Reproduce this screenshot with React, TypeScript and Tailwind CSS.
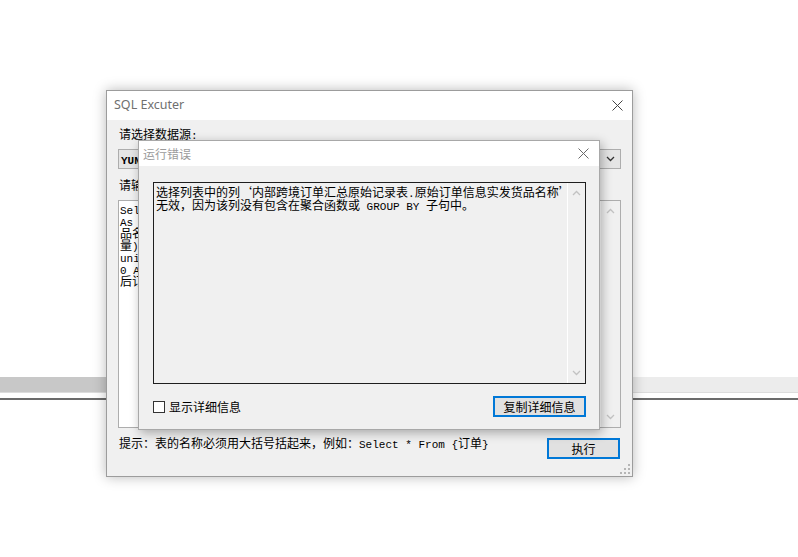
import React from "react"

// ascii runs get the mono face, the rest falls through to the CJK font
const Mixed = ({ text }: { text: string }) => (
    <>
        {text.split(/([\x20-\x7E]+)/).map((part, i) =>
            /^[\x20-\x7E]+$/.test(part) ? (
                <span key={i} className="font-['Liberation_Mono',monospace] text-[11px] leading-none">
                    {part}
                </span>
            ) : (
                <span key={i} className="leading-none">{part}</span>
            )
        )}
    </>
)

const CloseX = ({ color }: { color: string }) => (
    <svg width="11" height="11" viewBox="0 0 11 11">
        <path d="M0.5 0.5L10.5 10.5M10.5 0.5L0.5 10.5" stroke={color} strokeWidth="1" fill="none" />
    </svg>
)

const Chevron = ({ up, color }: { up?: boolean; color: string }) => (
    <svg width="9" height="6" viewBox="0 0 9 6">
        <polyline
            points={up ? "1,5 4.5,1.5 8,5" : "1,1 4.5,4.5 8,1"}
            fill="none"
            stroke={color}
            strokeWidth="1.3"
        />
    </svg>
)

const Grip = () => (
    <svg width="11" height="11" viewBox="0 0 11 11">
        <rect x="8" y="0" width="2" height="2" fill="#b5b5b5" />
        <rect x="4" y="4" width="2" height="2" fill="#b5b5b5" />
        <rect x="8" y="4" width="2" height="2" fill="#b5b5b5" />
        <rect x="0" y="8" width="2" height="2" fill="#b5b5b5" />
        <rect x="4" y="8" width="2" height="2" fill="#b5b5b5" />
        <rect x="8" y="8" width="2" height="2" fill="#b5b5b5" />
    </svg>
)

const SqlLines = [
    "Select 内部跨境订单汇总原始记录表.订单编号",
    "As 订单号, 原始订单信息实发货品名称 As 货",
    "品名称, Sum(实发数量) As 实发数",
    "量) From {内部跨境订单汇总}",
    "union all Select 订单编号, 货品",
    "0 As 数量 From {售后单}",
    "后订单",
]

const ErrorLines = [
    "选择列表中的列‘内部跨境订单汇总原始记录表.原始订单信息实发货品名称’",
    "无效，因为该列没有包含在聚合函数或 GROUP BY 子句中。",
]

export default function App() {
    return (
        <div className="relative w-[798px] h-[557px] overflow-hidden bg-white font-['Noto_Sans_CJK_SC',sans-serif] text-[12px] text-black">
            {/* page behind the windows */}
            <div className="flex flex-col">
                <div className="h-[377px]" />
                <div className="flex h-[15px]">
                    <div className="w-[106px] bg-[#c8c8c8]" />
                    <div className="flex-1 bg-[#ececec]" />
                </div>
                <div className="h-px bg-[#dcdcdc]" />
                <div className="h-[5px]" />
                <div className="h-[2px] bg-[#6b6b6b]" />
            </div>

            {/* SQL Excuter window */}
            <div className="absolute left-[106px] top-[90px] w-[527px] h-[387px] border border-[#9c9c9c] bg-[#f0f0f0] shadow-[0_0_12px_rgba(0,0,0,0.28)] flex flex-col">
                <div className="h-[29px] shrink-0 bg-white flex items-center justify-between pl-[7px] pr-[9px]">
                    <span className="font-['Noto_Sans',sans-serif] text-[12.5px] text-[#6f6f6f]">SQL Excuter</span>
                    <CloseX color="#444444" />
                </div>
                <div className="relative flex-1 flex flex-col px-[11px] pt-[6px]">
                    <div className="h-[16px] leading-[16px] pl-[1px]">
                        <Mixed text="请选择数据源:" />
                    </div>
                    <div className="mt-[7px] h-[20px] border border-[#adadad] bg-[#e5e5e5] flex items-center">
                        <div className="flex-1 pl-[2px] h-[16px] leading-[16px] font-bold">
                            <Mixed text="YUNDA_ERP" />
                        </div>
                        <div className="w-[20px] flex justify-center">
                            <Chevron color="#333333" />
                        </div>
                    </div>
                    <div className="mt-[8px] h-[16px] leading-[16px] pl-[1px]">
                        <Mixed text="请输入SQL语句:" />
                    </div>
                    <div className="mt-[7px] h-[228px] shrink-0 border border-[#adadad] bg-white flex">
                        <div className="flex-1 pl-[1px] pt-[2px] whitespace-pre overflow-hidden">
                            {SqlLines.map((line, i) => (
                                <div key={i} className="h-[12px] leading-[12px]">
                                    <Mixed text={line} />
                                </div>
                            ))}
                        </div>
                        <div className="w-[19px] bg-[#f0f0f0] flex flex-col justify-between items-center py-[7px]">
                            <Chevron up color="#c2c2c2" />
                            <Chevron color="#c2c2c2" />
                        </div>
                    </div>
                    <div className="mt-[7px] flex items-start justify-between">
                        <div className="h-[16px] leading-[16px] pl-[1px] whitespace-pre">
                            <Mixed text="提示：表的名称必须用大括号括起来，例如：Select * From {订单}" />
                        </div>
                        <button className="mt-[3px] mr-[1px] w-[73px] h-[21px] border-2 border-[#0078d7] bg-[#e1e1e1] text-[12px] leading-[15px]">
                            执行
                        </button>
                    </div>
                    <div className="absolute right-[1px] bottom-[1px]">
                        <Grip />
                    </div>
                </div>
            </div>

            {/* 运行错误 dialog */}
            <div className="absolute left-[138px] top-[140px] w-[462px] h-[290px] border border-[#a8a8a8] bg-[#f0f0f0] shadow-[2px_3px_10px_rgba(0,0,0,0.3)] flex flex-col">
                <div className="h-[25px] shrink-0 bg-white flex items-center justify-between pl-[4px] pr-[10px]">
                    <span className="text-[#9b9b9b] leading-[16px]">运行错误</span>
                    <CloseX color="#6a6a6a" />
                </div>
                <div className="flex flex-col px-[14px] pt-[16px]">
                    <div className="w-[433px] h-[202px] border border-[#1e1e1e] flex">
                        <div className="flex-1 pl-[2px] pt-[2px] whitespace-pre overflow-hidden">
                            {ErrorLines.map((line, i) => (
                                <div key={i} className="h-[13px] leading-[13px]">
                                    <Mixed text={line} />
                                </div>
                            ))}
                        </div>
                        <div className="w-[18px] border-l border-white flex flex-col justify-between items-center py-[7px]">
                            <Chevron up color="#c2c2c2" />
                            <Chevron color="#c2c2c2" />
                        </div>
                    </div>
                    <div className="mt-[12px] w-[433px] flex items-center justify-between">
                        <label className="flex items-center gap-[4px] leading-[16px]">
                            <span className="w-[12px] h-[12px] border border-[#333333] bg-white" />
                            显示详细信息
                        </label>
                        <button className="w-[93px] h-[21px] border-2 border-[#0078d7] bg-[#e1e1e1] text-[12px] leading-[15px]">
                            复制详细信息
                        </button>
                    </div>
                </div>
            </div>
        </div>
    )
}
